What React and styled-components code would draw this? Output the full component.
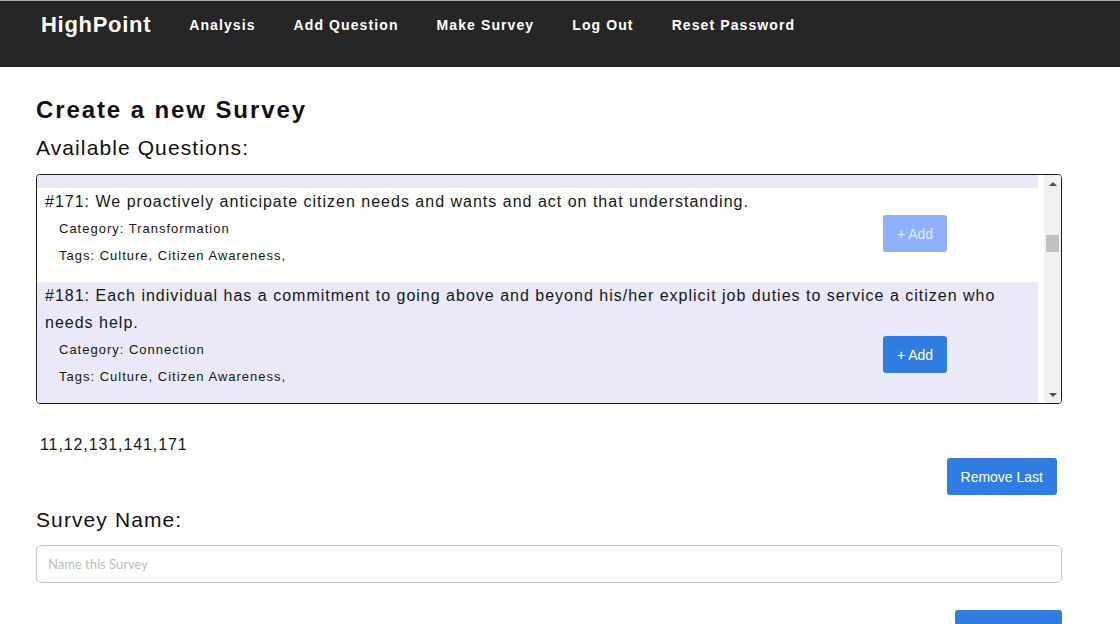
import React from "react";
import styled, { createGlobalStyle } from "styled-components";

const Global = createGlobalStyle`
  html, body { margin: 0; padding: 0; background: #fff; }
  body { font-family: "Liberation Sans", Arial, sans-serif; color: #111; }
  * { box-sizing: border-box; }
`;

const NavBar = styled.nav`
  height: 67px;
  background: #262626;
  border-top: 1px solid #a9a9a9;
  display: flex;
  align-items: flex-start;
  padding: 10px 0 0 41px;
  font-family: "Liberation Sans", Arial, sans-serif;
`;

const Brand = styled.a`
  color: #fff;
  font-size: 22px;
  font-weight: bold;
  line-height: 28px;
  letter-spacing: 0.7px;
  text-decoration: none;
  margin-right: 38px;
`;

const NavLinks = styled.div`
  display: flex;
  gap: 38px;
  padding-top: 5px;
`;

const NavLink = styled.a`
  color: #fff;
  font-size: 14px;
  font-weight: bold;
  letter-spacing: 1.1px;
  line-height: 18px;
  text-decoration: none;
`;

const Main = styled.main`
  width: 1026px;
  margin-left: 36px;
  display: flex;
  flex-direction: column;
`;

const Title = styled.h1`
  margin: 29px 0 0;
  font-size: 24px;
  line-height: 28px;
  font-weight: bold;
  letter-spacing: 1.9px;
  color: #111;
`;

const Label = styled.h2`
  margin: ${(p) => p.$top}px 0 0;
  font-size: 21px;
  line-height: 26px;
  font-weight: normal;
  letter-spacing: 1.1px;
  color: #111;
`;

const ListBox = styled.div`
  margin-top: 13px;
  height: 230px;
  border: 1px solid #1a1a1a;
  border-radius: 4px;
  display: flex;
  overflow: hidden;
`;

const Viewport = styled.div`
  flex: 1;
  overflow: hidden;
  padding-right: 6px;
`;

const PrevTail = styled.div`
  height: 13px;
  background: #e9e9fa;
`;

const Item = styled.div`
  background: ${(p) => (p.$alt ? "#e9e9fa" : "#fff")};
  padding: 0 0 13px 8px;
`;

const Question = styled.div`
  font-size: 16px;
  line-height: 27px;
  letter-spacing: 1px;
  color: #161616;
  padding-right: 20px;
`;

const MetaRow = styled.div`
  display: flex;
  align-items: flex-start;
  justify-content: space-between;
  padding: 0 91px 0 14px;
`;

const Meta = styled.div`
  font-size: 13px;
  line-height: 27px;
  letter-spacing: 1px;
  color: #161616;
`;

const Button = styled.button`
  font-family: "Liberation Sans", Arial, sans-serif;
  font-size: 14px;
  height: 37px;
  padding: 0 14px;
  border: none;
  border-radius: 3px;
  background: ${(p) => (p.disabled ? "#8fb0fa" : "#2f7de1")};
  color: ${(p) => (p.disabled ? "#e3ebff" : "#fff")};
  cursor: ${(p) => (p.disabled ? "default" : "pointer")};
`;

const AddButton = styled(Button)`
  width: 64px;
  padding: 0;
`;

const ScrollTrack = styled.div`
  width: 17px;
  background: #f1f1f1;
  display: flex;
  flex-direction: column;
  align-items: center;
`;

const Arrow = styled.div`
  width: 17px;
  height: 17px;
  display: flex;
  align-items: center;
  justify-content: center;
  &::before {
    content: "";
    border-left: 4px solid transparent;
    border-right: 4px solid transparent;
    ${(p) => (p.$down ? "border-top" : "border-bottom")}: 4px solid #505050;
  }
`;

const TrackBody = styled.div`
  flex: 1;
  width: 100%;
  padding: 43px 2px 0;
`;

const Thumb = styled.div`
  height: 17px;
  background: #c1c1c1;
`;

const Selected = styled.div`
  margin-top: 31px;
  padding-left: 4px;
  font-size: 16px;
  line-height: 20px;
  letter-spacing: 0.9px;
  color: #161616;
`;

const RightRow = styled.div`
  display: flex;
  justify-content: flex-end;
  margin-top: ${(p) => p.$top}px;
  padding-right: ${(p) => p.$right || 0}px;
`;

const NameInput = styled.input`
  margin-top: 12px;
  height: 38px;
  width: 100%;
  border: 1px solid #c3c7cb;
  border-radius: 5px;
  padding: 0 11px;
  font-family: Lato, "Liberation Sans", sans-serif;
  font-size: 13px;
  outline: none;
  &::placeholder { color: #b9bdc2; }
`;

const questions = [
  { id: 171, text: "We proactively anticipate citizen needs and wants and act on that understanding.", cat: "Transformation", tags: "Culture, Citizen Awareness," },
  { id: 181, text: "Each individual has a commitment to going above and beyond his/her explicit job duties to service a citizen who needs help.", cat: "Connection", tags: "Culture, Citizen Awareness," },
];

const chosen = [11, 12, 131, 141, 171];

export default function App() {
  return (
    <>
      <Global />
      <NavBar>
        <Brand href="#">HighPoint</Brand>
        <NavLinks>
          <NavLink href="#">Analysis</NavLink>
          <NavLink href="#">Add Question</NavLink>
          <NavLink href="#">Make Survey</NavLink>
          <NavLink href="#">Log Out</NavLink>
          <NavLink href="#">Reset Password</NavLink>
        </NavLinks>
      </NavBar>
      <Main>
        <Title>Create a new Survey</Title>
        <Label $top={11}>Available Questions:</Label>
        <ListBox>
          <Viewport>
            <PrevTail />
            {questions.map((q, i) => (
              <Item key={q.id} $alt={i % 2 === 1}>
                <Question>#{q.id}: {q.text}</Question>
                <MetaRow>
                  <div>
                    <Meta>Category: {q.cat}</Meta>
                    <Meta>Tags: {q.tags}</Meta>
                  </div>
                  <AddButton disabled={chosen.includes(q.id)}>+ Add</AddButton>
                </MetaRow>
              </Item>
            ))}
          </Viewport>
          <ScrollTrack>
            <Arrow />
            <TrackBody>
              <Thumb />
            </TrackBody>
            <Arrow $down />
          </ScrollTrack>
        </ListBox>
        <Selected>{chosen.join(",")}</Selected>
        <RightRow $top={3} $right={5}>
          <Button>Remove Last</Button>
        </RightRow>
        <Label $top={12}>Survey Name:</Label>
        <NameInput placeholder="Name this Survey" />
        <RightRow $top={27}>
          <Button>Save Survey</Button>
        </RightRow>
      </Main>
    </>
  );
}
